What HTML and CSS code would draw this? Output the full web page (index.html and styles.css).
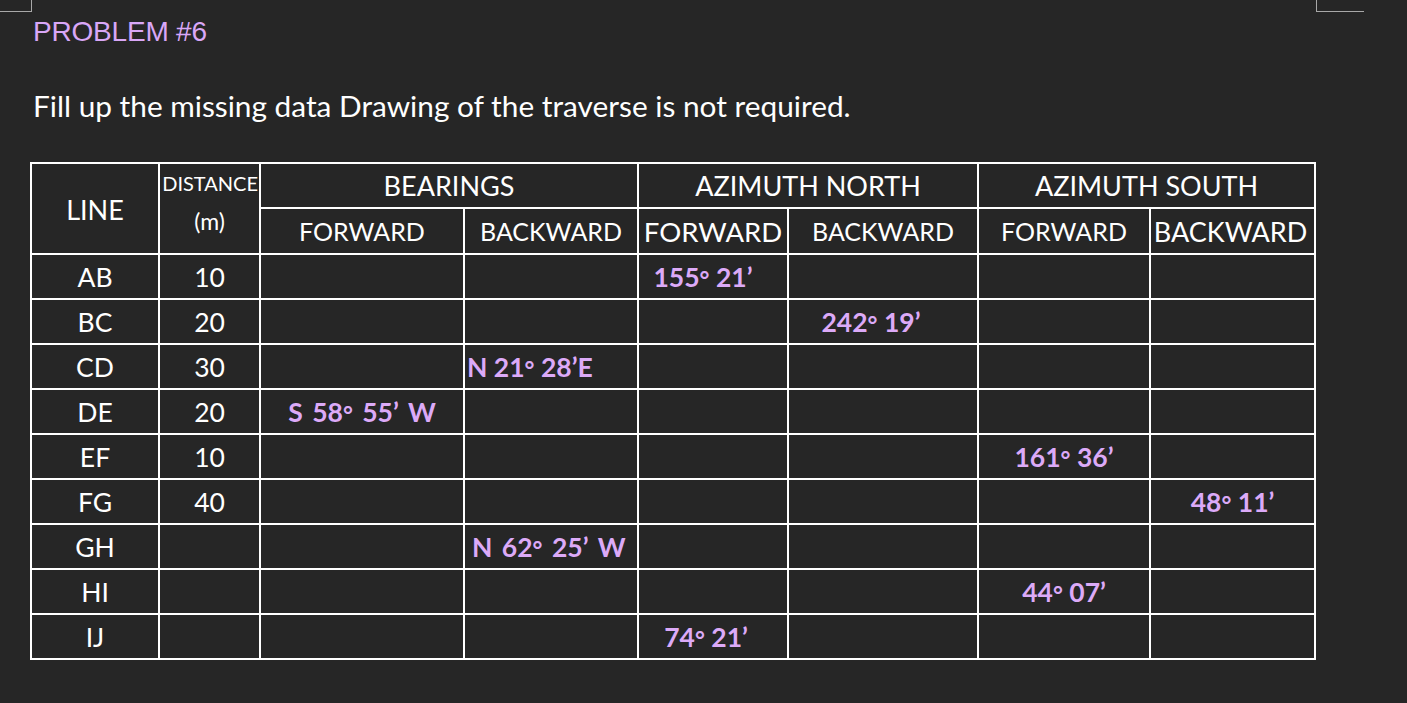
FILE: index.html
```html
<!DOCTYPE html>
<html>
<head>
<meta charset="utf-8">
<link rel="stylesheet" href="styles.css">
</head>
<body>
<div class="mark mark-left"></div>
<div class="mark mark-right"></div>
<div class="page">
  <h1 class="title">PROBLEM #6</h1>
  <p class="intro">Fill up the missing data Drawing of the traverse is not required.</p>
  <table class="grid">
    <colgroup>
      <col class="c1"><col class="c2"><col class="c3"><col class="c4"><col class="c5"><col class="c6"><col class="c7"><col class="c8">
    </colgroup>
    <thead>
      <tr class="h1">
        <th rowspan="2" class="line-h">LINE</th>
        <th rowspan="2" class="dist-h"><div class="dist-top">DISTANCE</div><div class="dist-unit">(m)</div></th>
        <th colspan="2" class="group">BEARINGS</th>
        <th colspan="2" class="group">AZIMUTH NORTH</th>
        <th colspan="2" class="group">AZIMUTH SOUTH</th>
      </tr>
      <tr class="h2">
        <th>FORWARD</th>
        <th>BACKWARD</th>
        <th class="tight">FORWARD</th>
        <th>BACKWARD</th>
        <th>FORWARD</th>
        <th class="tight tight-end">BACKWARD</th>
      </tr>
    </thead>
    <tbody>
      <tr><td>AB</td><td>10</td><td></td><td></td><td class="v shift">155<span class="deg">°</span> 21’</td><td></td><td></td><td></td></tr>
      <tr><td>BC</td><td>20</td><td></td><td></td><td></td><td class="v shift2">242<span class="deg">°</span> 19’</td><td></td><td></td></tr>
      <tr><td>CD</td><td>30</td><td></td><td class="v left">N 21<span class="deg">°</span> 28’E</td><td></td><td></td><td></td><td></td></tr>
      <tr><td>DE</td><td>20</td><td class="v wide">S 58<span class="deg">°</span> 55’ W</td><td></td><td></td><td></td><td></td><td></td></tr>
      <tr><td>EF</td><td>10</td><td></td><td></td><td></td><td></td><td class="v">161<span class="deg">°</span> 36’</td><td></td></tr>
      <tr><td>FG</td><td>40</td><td></td><td></td><td></td><td></td><td></td><td class="v">48<span class="deg">°</span> 11’</td></tr>
      <tr><td>GH</td><td></td><td></td><td class="v left2 wide">N 62<span class="deg">°</span> 25’ W</td><td></td><td></td><td></td><td></td></tr>
      <tr><td>HI</td><td></td><td></td><td></td><td></td><td></td><td class="v">44<span class="deg">°</span> 07’</td><td></td></tr>
      <tr><td>IJ</td><td></td><td></td><td></td><td class="v shift3">74<span class="deg">°</span> 21’</td><td></td><td></td><td></td></tr>
    </tbody>
  </table>
</div>
</body>
</html>
```

FILE: styles.css
```css
html, body {
  margin: 0;
  padding: 0;
  background: #262626;
  width: 1407px;
  height: 703px;
  overflow: hidden;
}

body {
  position: relative;
  color: #ffffff;
  font-family: "Lato", "Open Sans", sans-serif;
}

.mark {
  position: absolute;
  border-color: #a8a8a8;
  border-style: solid;
}

.mark-left {
  left: 0;
  top: 0;
  width: 31px;
  height: 11px;
  border-width: 0 1px 1px 0;
}

.mark-right {
  left: 1316px;
  top: 0;
  width: 47px;
  height: 11px;
  border-width: 0 0 1px 1px;
}

.page {
  padding: 0 0 0 30px;
}

.title {
  margin: 0;
  padding: 14px 0 0 3px;
  font-family: "Liberation Sans", Arial, sans-serif;
  font-weight: normal;
  font-size: 28px;
  line-height: 36px;
  color: #d9a7f7;
  letter-spacing: -0.2px;
}

.intro {
  margin: 0;
  padding: 39px 0 0 3px;
  font-size: 29.8px;
  line-height: 34px;
  color: #ffffff;
}

.grid {
  margin-top: 39px;
  border-collapse: collapse;
  table-layout: fixed;
  width: 1286px;
}

.c1 { width: 128px; }
.c2 { width: 101px; }
.c3 { width: 204px; }
.c4 { width: 174px; }
.c5 { width: 150px; }
.c6 { width: 190px; }
.c7 { width: 172px; }
.c8 { width: 165px; }

.grid th,
.grid td {
  border: 2px solid #ffffff;
  padding: 0;
  text-align: center;
  vertical-align: middle;
  font-weight: normal;
  font-size: 26.5px;
  color: #ffffff;
  white-space: nowrap;
  overflow: hidden;
}

.grid tr { height: 45px; }
.grid tr.h2 { height: 46px; }

.grid th {
  font-size: 25px;
}

.grid th.group {
  font-size: 27px;
}

.grid th.tight {
  font-size: 27.5px;
}

.grid th.tight-end {
  font-size: 27px;
  padding-right: 4px;
}

.grid th.line-h {
  font-size: 27px;
  padding-top: 2px;
}

.grid th.dist-h {
  vertical-align: top;
}

.dist-top {
  font-size: 20px;
  line-height: 22px;
  padding-top: 8px;
  text-align: right;
  padding-right: 1px;
}

.dist-unit {
  font-size: 23px;
  line-height: 28px;
  padding-top: 13px;
}

.grid td.v {
  color: #dcaaf8;
  font-weight: bold;
  font-size: 26.5px;
}

.grid td.wide {
  word-spacing: 3px;
}

.grid td.left {
  text-align: left;
  padding-left: 2px;
}

.grid td.left2 {
  text-align: left;
  padding-left: 7px;
}

.grid td.shift { padding-right: 20px; }
.grid td.shift2 { padding-right: 24px; }
.grid td.shift3 { padding-right: 14px; }

.deg {
  position: relative;
  top: 0.12em;
  font-size: 0.9em;
}
```
